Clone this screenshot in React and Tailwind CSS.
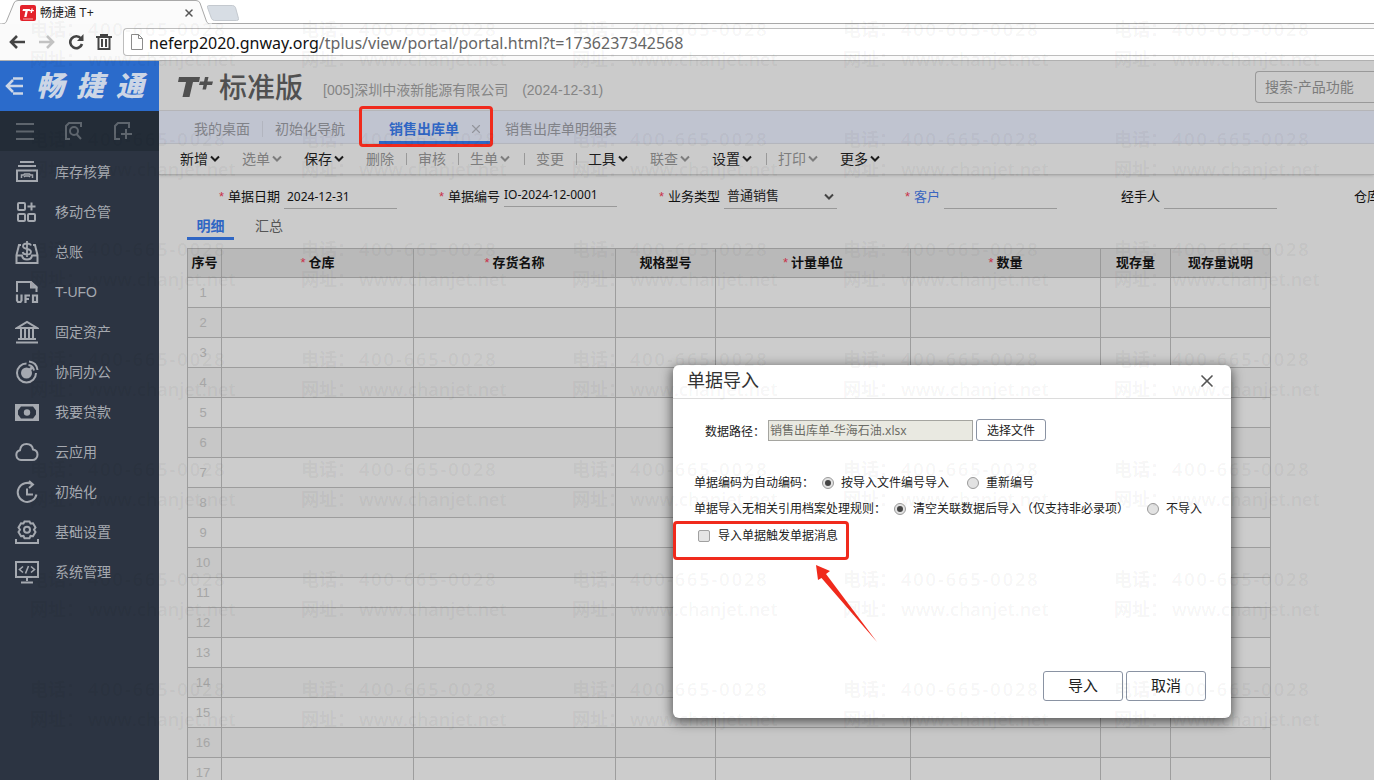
import { useState } from 'react'
import { X } from 'lucide-react'

const menuItems = [
  { label: '库存核算', icon: StockIcon },
  { label: '移动仓管', icon: GridPlusIcon },
  { label: '总账', icon: LedgerIcon },
  { label: 'T-UFO', icon: UfoIcon },
  { label: '固定资产', icon: BankIcon },
  { label: '协同办公', icon: TeamIcon },
  { label: '我要贷款', icon: LoanIcon },
  { label: '云应用', icon: CloudIcon },
  { label: '初始化', icon: InitIcon },
  { label: '基础设置', icon: GearIcon },
  { label: '系统管理', icon: SystemIcon },
]

const tools = [
  { label: '新增', menu: true, active: true },
  { label: '选单', menu: true },
  { label: '保存', menu: true, active: true },
  { label: '删除', sep: true },
  { label: '审核', sep: true },
  { label: '生单', menu: true, sep: true },
  { label: '变更', sep: true },
  { label: '工具', menu: true, active: true },
  { label: '联查', menu: true },
  { label: '设置', menu: true, active: true, sep: true },
  { label: '打印', menu: true },
  { label: '更多', menu: true, active: true },
]

const columns = [
  { label: '序号', width: 'w-[34px]' },
  { label: '仓库', width: 'w-[192px]', required: true },
  { label: '存货名称', width: 'w-[202px]', required: true },
  { label: '规格型号', width: 'w-[100px]' },
  { label: '计量单位', width: 'w-[195px]', required: true },
  { label: '数量', width: 'w-[190px]', required: true },
  { label: '现存量', width: 'w-[70px]' },
  { label: '现存量说明', width: 'w-[100px]' },
]

const rows = Array.from({ length: 17 }, (_, i) => i + 1)
const marks = Array.from({ length: 35 }, (_, i) => i)

function MenuSvg({ children }) {
  return (
    <svg
      className="h-6 w-6 shrink-0"
      viewBox="0 0 24 24"
      fill="none"
      stroke="currentColor"
      strokeWidth="2"
      aria-hidden="true"
    >
      {children}
    </svg>
  )
}

function StockIcon() {
  return (
    <MenuSvg>
      <path d="M5 2h14M3 6h18M2 10.500h20v10.500H2z" />
      <path d="M6.500 18v-3h2l1-1h5l1 1h2v3M9 17l1-1h4l1 1" strokeWidth="1.500" />
    </MenuSvg>
  )
}

function GridPlusIcon() {
  return (
    <MenuSvg>
      <rect x="3" y="3" width="7" height="7" rx="1" />
      <rect x="3" y="14" width="7" height="7" rx="1" />
      <rect x="13" y="14" width="7" height="7" rx="1" />
      <path d="M16.500 2.500v8M12.500 6.500h8" />
    </MenuSvg>
  )
}

function LedgerIcon() {
  return (
    <MenuSvg>
      <path d="M6 5H4L1.500 15v8h21v-8L20 5h-2M1.500 15.500H7c.5 3 2 4 5 4s4.500-1 5-4h5.500" />
      <path d="M16 5.500C15.500 4 14 3.500 12 3.500c-2.500 0-4 1-4 2.700 0 3.800 8 1.800 8 5.500 0 1.800-1.800 2.800-4 2.800-2.500 0-4-.8-4.300-2.500M12 1v16" strokeWidth="1.800" />
    </MenuSvg>
  )
}

function UfoIcon() {
  return (
    <MenuSvg>
      <path d="M2 12V2h14l5.500 5v5" />
      <path d="M15 2v6.500h7.500V7L16 1z" fill="currentColor" stroke="none" />
      <path d="M2 14.500v6l1 1.500h2.500l1-1.500v-6M10.500 23v-7.500H15M10.500 19H14M18 15.500h4V22h-4z" strokeWidth="2.200" />
    </MenuSvg>
  )
}

function BankIcon() {
  return (
    <MenuSvg>
      <path d="M2 8h20L12 2zM1 22.500h22M3 19h18M6 9v9M10 9v9M14 9v9M18 9v9" />
    </MenuSvg>
  )
}

function TeamIcon() {
  return (
    <MenuSvg>
      <path d="M11.500 3.500a9.500 9.500 0 1 0 9.500 9.500M13.500 5c3 .5 5 2.500 5.500 5.500M14 1.500c5 .5 8 4 8.500 8.500" />
      <circle cx="11.500" cy="13" r="5.500" fill="currentColor" stroke="none" />
      <path d="M12 12.500L17.500 7" strokeWidth="2.500" />
    </MenuSvg>
  )
}

function LoanIcon() {
  return (
    <MenuSvg>
      <path fill="currentColor" fillRule="evenodd" stroke="none" d="M0 4h24v17H0zM6 6.500h12l3 4v4l-3 4H6l-3-4v-4z" />
      <circle cx="12" cy="12.500" r="3.200" fill="currentColor" stroke="none" />
    </MenuSvg>
  )
}

function CloudIcon() {
  return (
    <MenuSvg>
      <path d="M6 20a5 5 0 0 1-1-9.800C5.500 6.500 8 4 11.500 4c3.500 0 6 2.300 6.500 5.500 3 .5 4.500 2.700 4.500 5.200 0 3-2.300 5.300-5 5.300z" />
    </MenuSvg>
  )
}

function InitIcon() {
  return (
    <MenuSvg>
      <path d="M17.500 4.500A9.500 9.500 0 1 0 21.500 14.500M14 1l4 3.500-4 3.500M12 8.500v6h6" />
    </MenuSvg>
  )
}

function GearIcon() {
  return (
    <MenuSvg>
      <path d="M9.500 1.500h5l1 2 2.500-.3 2.500 4.200-1.500 2.300 1.500 2.300-2.500 4.200-2.500-.3-1 2.300h-5l-1-2.300-2.500.3L3.500 12 5 9.700 3.500 7.400 6 3.200l2.500.3z" />
      <circle cx="12" cy="9.700" r="3" />
      <path d="M1 19v4h22v-4" />
    </MenuSvg>
  )
}

function SystemIcon() {
  return (
    <MenuSvg>
      <path d="M1 2h22v15H1zM12 17v4M6 22.500h12" />
      <path d="M8 6.500l-3.500 3L8 12.500M16 6.500l3.500 3-3.500 3M13.500 6l-3 7.500" strokeWidth="1.600" />
    </MenuSvg>
  )
}

function Chevron() {
  return (
    <svg className="h-2 w-2.5 shrink-0" viewBox="0 0 10 8" fill="none" stroke="currentColor" strokeWidth="2" aria-hidden="true">
      <path d="M1 1.500l4 4 4-4" />
    </svg>
  )
}

function BrowserBar() {
  return (
    <header className="h-[61px] shrink-0 border-b border-[#b0b0b0] bg-[#fafafa]">
      <div className="relative flex h-6 items-center bg-white">
        <svg className="absolute left-0 top-0 h-6 w-60" viewBox="0 0 240 24" fill="none" aria-hidden="true">
          <path d="M0 24c5 0 6-1 7-4l7-17q1-2.500 4-2.500h178q3 0 4 2.500l6 17c1 3 2 4 6 4z" fill="#fbfbfb" />
          <path d="M0 24c5 0 6-1 7-4l7-17q1-2.500 4-2.500h178q3 0 4 2.500l6 17c1 3 2 4 6 4h28" stroke="#a8a8a8" />
          <path d="M208.500 5.500h24q2 0 3 2l3 11q.5 2-2 2h-22q-2 0-3-2l-4-11q-.5-2 1-2z" fill="#d7dde4" stroke="#c4c9cf" />
        </svg>
        <div className="relative flex w-[195px] items-center pl-5 pt-0.5">
          <svg className="h-4 w-4" viewBox="0 0 16 16" aria-hidden="true">
            <rect width="16" height="16" rx="2" fill="#e3222b" />
            <path d="M3 4h7L9.600 6H7.800L6.500 12H4.200l1.300-6H2.500zM11.500 3.500h1.300l-.3 1.500H14l-.3 1.300h-1.500L11.900 8h-1.300l.3-1.700H9.400L9.700 5h1.500z" fill="#fff" />
            <path d="M3 14h10" stroke="#f6a5a9" />
          </svg>
          <span className="ml-1 grow text-xs text-[#222]">畅捷通 T+</span>
          <button type="button" aria-label="关闭标签页" className="text-[#555]">
            <X className="h-3 w-3" strokeWidth={3} />
          </button>
        </div>
        <div className="ml-[17px] h-px grow self-end bg-[#a8a8a8]" />
      </div>
      <div className="flex h-9 items-center text-[#444]">
        <div className="flex w-[123px] shrink-0 items-center gap-3 pl-2">
          <button type="button" aria-label="后退">
            <svg className="h-[18px] w-[18px]" viewBox="0 0 18 18" fill="none" stroke="currentColor" strokeWidth="2.600">
              <path d="M17 9H3M9 3L3 9l6 6" />
            </svg>
          </button>
          <button type="button" aria-label="前进" className="text-[#c2c2c2]">
            <svg className="h-[18px] w-[18px]" viewBox="0 0 18 18" fill="none" stroke="currentColor" strokeWidth="2.600">
              <path d="M1 9h14M9 3l6 6-6 6" />
            </svg>
          </button>
          <button type="button" aria-label="刷新">
            <svg className="h-4 w-4" viewBox="0 0 16 16" fill="none" stroke="currentColor" strokeWidth="2.600">
              <path d="M13 4.500A6 6 0 1 0 14 10" />
              <path d="M15.500 0v7H9z" fill="currentColor" stroke="none" />
            </svg>
          </button>
          <button type="button" aria-label="清除">
            <svg className="h-4 w-4" viewBox="0 0 16 16" fill="none" stroke="currentColor" strokeWidth="2">
              <path d="M0 3h16M5 2V1h6v1M2.500 3v12h11V3M6 5v8M10 5v8" />
            </svg>
          </button>
        </div>
        <div className="flex h-7 grow items-center rounded-l-sm border border-r-0 border-[#bdbdbd] bg-white pl-[7px]">
          <svg className="h-4 w-3" viewBox="0 0 12 16" fill="#fff" stroke="#8c8c8c" aria-hidden="true">
            <path d="M.5.5h7l4 4v11H.5zM7.500.5v4h4" />
          </svg>
          <p className="ml-[6px] whitespace-nowrap pt-0.5 font-['Noto_Sans',sans-serif] text-base leading-6 text-[#666]">
            <span className="text-[#111]">neferp2020.gnway.org</span>/tplus/view/portal/portal.html?t=1736237342568
          </p>
        </div>
      </div>
    </header>
  )
}

function Sidebar() {
  return (
    <aside className="w-[159px] shrink-0 bg-[#2c3442] text-[#a5a9b0]">
      <div className="flex h-[50px] items-center bg-[#2b6bcb] pl-[5px] text-[#ccd6e6]">
        <button type="button" aria-label="收起菜单">
          <svg className="h-[18px] w-[18px]" viewBox="0 0 18 18" fill="none" stroke="currentColor" strokeWidth="2.500">
            <path d="M8 1.500h10M2 9h16M8 16.500h10M8 3L2 9l6 6" />
          </svg>
        </button>
        <div className="ml-[13px] flex gap-3 pb-1 font-['Noto_Sans_CJK_SC',sans-serif] text-[28px] font-black italic leading-8">
          <span>畅</span>
          <span>捷</span>
          <span>通</span>
        </div>
      </div>
      <div className="flex h-[40px] items-center gap-[31px] bg-[#232c37] pl-4 text-[#5e656d]">
        <button type="button" aria-label="菜单">
          <svg className="h-[18px] w-[18px]" viewBox="0 0 18 18" fill="none" stroke="currentColor" strokeWidth="2">
            <path d="M0 2h18M0 9.500h18M0 17h18" />
          </svg>
        </button>
        <button type="button" aria-label="查找">
          <svg className="h-[18px] w-[18px]" viewBox="0 0 18 18" fill="none" stroke="currentColor" strokeWidth="2">
            <path d="M5 17H1V4l3-3h12v4M11.500 12L16 17" />
            <circle cx="9" cy="9" r="4" />
          </svg>
        </button>
        <button type="button" aria-label="新建">
          <svg className="h-[18px] w-[18px]" viewBox="0 0 18 18" fill="none" stroke="currentColor" strokeWidth="2">
            <path d="M6 17H1V4l3-3h11v5M12 7v10M7 12h11" />
          </svg>
        </button>
      </div>
      <nav className="pt-px">
        {menuItems.map(({ label, icon: Icon }) => (
          <a key={label} href="#" className="flex h-10 items-center gap-4 pl-[15px] text-sm">
            <Icon />
            {label}
          </a>
        ))}
      </nav>
    </aside>
  )
}

function TopHeader() {
  return (
    <div className="flex h-[50px] items-center border-b border-[#b5b5b8] pl-[19px] pt-0.5 text-[#858585]">
      <svg className="h-[22px] w-9 text-[#505050]" viewBox="0 0 36 22" fill="currentColor" aria-label="T+">
        <path d="M1 1h21l-1 5h-6l-3.500 15H4.500L8 6H0zM27 1h3.500l-1 4.500H35l-1 3.500h-5l-1 4.500h-3.500l1-4.500H21l1-3.500h4z" />
      </svg>
      <h1 className="ml-[5px] pb-0.5 font-['Noto_Sans_CJK_SC',sans-serif] text-[28px] font-medium leading-8 text-[#505050]">标准版</h1>
      <p className="ml-5 mt-1.5 whitespace-nowrap text-sm">[005]深圳中液新能源有限公司</p>
      <p className="ml-[14px] mt-1.5 whitespace-nowrap text-sm">(2024-12-31)</p>
      <input
        type="text"
        aria-label="搜索产品功能"
        placeholder="搜索-产品功能"
        className="ml-auto h-8 w-[119px] rounded-l-sm border border-r-0 border-[#999] bg-transparent pl-[9px] text-sm placeholder:text-[#7c7c7c]"
      />
    </div>
  )
}

function Tabs() {
  return (
    <div className="flex h-[33px] items-center border-b border-[#b7b9c0] bg-[#c0c4d0] pl-[35px] pt-[3px] text-sm text-[#808288]">
      <button type="button">我的桌面</button>
      <span className="mx-3 h-4 w-px bg-[#b2b5bf]" />
      <button type="button">初始化导航</button>
      {/* the open document, marked with a red frame */}
      <div className="relative ml-[34px] flex h-[30px] w-[114px] items-center justify-between border-b-[3px] border-[#2f66c4] pl-[10px] pr-[10px] pt-[3px] font-bold text-[#2f66c4]">
        <button type="button">销售出库单</button>
        <button type="button" aria-label="关闭" className="text-[#93959c]">
          <X className="h-3.5 w-3.5" strokeWidth={2} />
        </button>
        <span className="absolute -left-5 -top-2 h-[41px] w-[134px] rounded-sm border-[3px] border-[#f02a1c]" />
      </div>
      <button type="button" className="ml-3">销售出库单明细表</button>
    </div>
  )
}

function Toolbar() {
  return (
    <div className="flex h-[31px] items-center border-b border-[#a9a9a9] pl-[21px] text-sm shadow-sm">
      {tools.map((tool) => (
        <div
          key={tool.label}
          className={['flex shrink-0 items-center', tool.menu && !tool.sep ? 'mr-5' : ''].join(' ')}
        >
          <button
            type="button"
            className={[
              'flex items-center gap-0.5 whitespace-nowrap',
              tool.menu ? 'w-[42px]' : 'w-7',
              tool.active ? 'text-[#1c1c1c]' : 'text-[#7d7d7d]',
            ].join(' ')}
          >
            {tool.label}
            {tool.menu ? <Chevron /> : null}
          </button>
          {tool.sep ? (
            <span className="flex w-6 justify-center">
              <span className="h-3 w-px bg-[#999]" />
            </span>
          ) : null}
        </div>
      ))}
    </div>
  )
}

function Field({ id, label, required, link, children }) {
  return (
    <div className="flex w-[220px] shrink-0 items-center justify-end">
      <label htmlFor={id} className={['mr-1 whitespace-nowrap', link ? 'text-[#3a66c0]' : 'text-[#111]'].join(' ')}>
        {required ? <span className="mr-1 text-[#c8324a]">*</span> : null}
        {label}
      </label>
      {children}
    </div>
  )
}

const inputClass =
  "h-6 w-[113px] border-b border-[#999] bg-transparent pl-[3px] font-['Noto_Sans',sans-serif] text-xs text-[#111] outline-none"

function DocumentForm() {
  const [type, setType] = useState('普通销售')

  return (
    <form className="flex h-[39px] items-center overflow-hidden pl-[18px] pt-1 text-[13px]">
      <Field id="date" label="单据日期" required>
        <input id="date" type="text" defaultValue="2024-12-31" className={inputClass} />
      </Field>
      <Field id="code" label="单据编号" required>
        <input
          id="code"
          type="text"
          defaultValue="IO-2024-12-0001"
          className="mb-1 h-6 w-[113px] border-b border-[#999] bg-transparent font-['Noto_Sans',sans-serif] text-xs text-[#111] outline-none"
        />
      </Field>
      <Field id="type" label="业务类型" required>
        <div className="relative flex items-center">
          <select
            id="type"
            value={type}
            onChange={(event) => setType(event.target.value)}
            className="h-6 w-[113px] appearance-none border-b border-[#999] bg-transparent pl-[3px] text-[13px] text-[#222] outline-none"
          >
            <option>普通销售</option>
          </select>
          <span className="pointer-events-none absolute right-[3px] text-[#444]">
            <Chevron />
          </span>
        </div>
      </Field>
      <Field id="customer" label="客户" required link>
        <input id="customer" type="text" className={inputClass} />
      </Field>
      <Field id="handler" label="经手人">
        <input id="handler" type="text" className={inputClass} />
      </Field>
      <Field id="warehouse" label="仓库">
        <input id="warehouse" type="text" className={inputClass} />
      </Field>
    </form>
  )
}

function DetailTable() {
  return (
    <table className="ml-7 w-[1084px] table-fixed border-collapse text-[13px]">
      <thead>
        <tr className="h-[29px] bg-[#b9b9b9] text-[#111]">
          {columns.map((col) => (
            <th key={col.label} className={[col.width, 'whitespace-nowrap border border-[#999] p-0 font-bold leading-5'].join(' ')}>
              {col.required ? <span className="mr-[3px] font-normal text-[#c8324a]">*</span> : null}
              {col.label}
            </th>
          ))}
        </tr>
      </thead>
      <tbody>
        {rows.map((row) => (
          <tr key={row} className="h-[30px] odd:bg-[#cccccc] even:bg-[#c7c7c7]">
            {columns.map((col, i) => (
              <td key={col.label} className="border border-[#9d9d9d] p-0 pr-[3px] text-center leading-5 text-[#a6a6a6]">
                {i === 0 ? row : null}
              </td>
            ))}
          </tr>
        ))}
      </tbody>
    </table>
  )
}

const radioClass =
  'flex h-3 w-3 shrink-0 appearance-none items-center justify-center rounded-full border border-[#9a9a9a] bg-[#e2e2e2] checked:before:h-1.5 checked:before:w-1.5 checked:before:rounded-full checked:before:bg-[#444]'

function Radio({ name, value, current, onChange, children }) {
  return (
    <label className="flex items-center gap-[7px] whitespace-nowrap">
      <input
        type="radio"
        name={name}
        checked={current === value}
        onChange={() => onChange(value)}
        className={radioClass}
      />
      {children}
    </label>
  )
}

function ImportDialog() {
  const [numbering, setNumbering] = useState('file')
  const [rule, setRule] = useState('clear')

  return (
    <div
      role="dialog"
      aria-labelledby="import-title"
      className="absolute left-[673px] top-[365px] flex h-[353px] w-[558px] flex-col rounded-md bg-white text-xs text-[#222] shadow-[0_3px_12px_1px_rgba(0,0,0,0.6)]"
    >
      <div className="flex h-[34px] items-center justify-between border-b border-[#dcdcdc] pb-0.5 pl-[14px] pr-[14px]">
        <h2 id="import-title" className="text-lg leading-6 text-[#333]">单据导入</h2>
        <button type="button" aria-label="关闭" className="text-[#555]">
          <X className="h-5 w-5" strokeWidth={2} />
        </button>
      </div>

      <div className="mt-5 flex items-center pl-8">
        <label htmlFor="path" className="w-[63px] pt-1">数据路径：</label>
        <input
          id="path"
          type="text"
          readOnly
          value="销售出库单-华海石油.xlsx"
          className="h-[21px] w-[205px] border border-[#a5a5a0] bg-[#e9e9e1] pl-px font-['Noto_Sans','Noto_Sans_CJK_SC',sans-serif] text-xs text-[#6c6c66] outline-none"
        />
        <button type="button" className="ml-[3px] h-[22px] w-[70px] rounded-[3px] border border-[#8a93a3] pt-0.5">
          选择文件
        </button>
      </div>

      <fieldset className="mt-[34px] flex h-[18px] items-center pl-[21px]">
        <span className="mr-2">单据编码为自动编码：</span>
        <div className="flex gap-[18px]">
          <Radio name="numbering" value="file" current={numbering} onChange={setNumbering}>按导入文件编号导入</Radio>
          <Radio name="numbering" value="renew" current={numbering} onChange={setNumbering}>重新编号</Radio>
        </div>
      </fieldset>

      <fieldset className="mt-2 flex h-[18px] items-center whitespace-nowrap pl-[21px]">
        <span className="mr-2">单据导入无相关引用档案处理规则：</span>
        <div className="flex gap-[18px]">
          <Radio name="rule" value="clear" current={rule} onChange={setRule}>清空关联数据后导入（仅支持非必录项）</Radio>
          <Radio name="rule" value="skip" current={rule} onChange={setRule}>不导入</Radio>
        </div>
      </fieldset>

      <div className="relative mt-0.5 h-[39px] w-[176px] rounded-sm border-[3px] border-[#f02a1c] pl-[22px] pt-1">
        <label className="flex items-center gap-2 whitespace-nowrap">
          <input type="checkbox" className="h-3 w-3 appearance-none rounded-xs border border-[#a0a0a0] bg-[#e4e4e4] checked:bg-[#555]" />
          导入单据触发单据消息
        </label>
        <svg className="absolute left-[139px] top-10 h-20 w-[64px]" viewBox="0 0 64 80" fill="#f02a1c" aria-hidden="true">
          <path d="M1 1l14 6-4 3 51 68L6.500 14 3 16z" />
        </svg>
      </div>

      <div className="mb-[17px] mt-auto flex justify-end gap-[3px] pr-[25px] text-[15px]">
        <button type="button" className="h-[30px] w-20 rounded-[3px] border border-[#8a93a3]">导入</button>
        <button type="button" className="h-[30px] w-20 rounded-[3px] border border-[#8a93a3]">取消</button>
      </div>
    </div>
  )
}

function Watermark() {
  return (
    <div className="pointer-events-none absolute inset-0 overflow-hidden pl-[30px] pt-[14px]" aria-hidden="true">
      <div className="grid w-[1355px] grid-cols-5 font-['Open_Sans','Noto_Sans_CJK_SC',sans-serif] text-lg font-semibold leading-[30px] text-black/5">
        {marks.map((i) => (
          <div key={i} className="h-[110px] whitespace-nowrap">
            <p className="flex gap-1">
              电话：<span className="tracking-[2px]">400-665-0028</span>
            </p>
            <p className="flex gap-1">
              网址：<span>www.chanjet.net</span>
            </p>
          </div>
        ))}
      </div>
    </div>
  )
}

export default function App() {
  return (
    <div className="relative flex h-screen flex-col overflow-hidden bg-[#cbcbcb] font-['Liberation_Sans','Noto_Sans_CJK_SC',sans-serif]">
      <BrowserBar />
      <div className="flex min-h-0 grow">
        <Sidebar />
        <main className="min-w-0 grow overflow-hidden">
          <TopHeader />
          <Tabs />
          <Toolbar />
          <DocumentForm />
          <div className="mb-2 flex gap-[21px] pl-7 text-sm leading-5">
            <button type="button" className="h-[26px] w-[47px] border-b-[3px] border-[#2f66c4] font-bold text-[#2f66c4]">明细</button>
            <button type="button" className="h-[26px] pb-[3px] text-[#555]">汇总</button>
          </div>
          <DetailTable />
        </main>
      </div>
      <ImportDialog />
      <Watermark />
    </div>
  )
}
